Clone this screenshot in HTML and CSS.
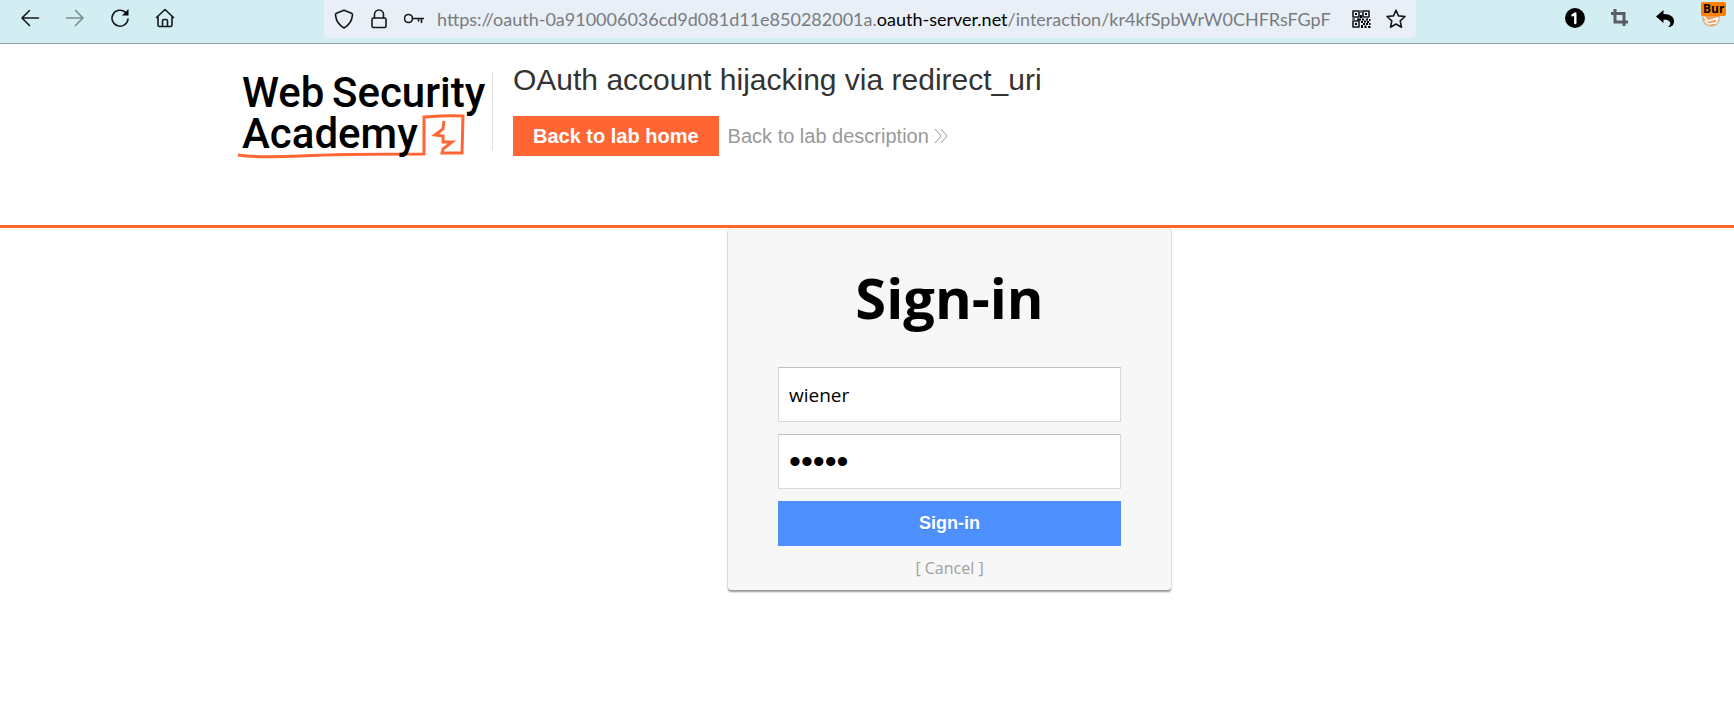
FILE: index.html
```html
<!DOCTYPE html>
<html lang="en">
<head>
<meta charset="utf-8">
<title>Sign-in</title>
<link rel="stylesheet" href="styles.css">
</head>
<body>
<div class="toolbar">
  <nav class="nav-buttons" aria-label="Browser navigation">
    <button class="icon-button" aria-label="Back"><svg width="20" height="20" viewBox="0 0 20 20"><path d="M18.5 10H2M9.5 2.5L2 10l7.5 7.5"/></svg></button>
    <button class="icon-button faded" aria-label="Forward"><svg width="20" height="20" viewBox="0 0 20 20"><path d="M1.500 10H18M10.500 2.500L18 10l-7.500 7.500"/></svg></button>
    <button class="icon-button" aria-label="Reload"><svg width="20" height="20" viewBox="0 0 20 20"><path d="M18 11a8 8 0 1 1-2.500-6.600"/><path class="solid" d="M18.500 1v6.500H12z"/></svg></button>
    <button class="icon-button" aria-label="Home"><svg width="20" height="20" viewBox="0 0 20 20"><path d="M1.500 9.500L10 1.500l8.500 8M3 8.500V17q0 1.500 1.500 1.500h11Q17 18.500 17 17V8.500M7.500 18.500V13q0-1.500 1.500-1.500h2q1.500 0 1.500 1.500v5.500"/></svg></button>
  </nav>
  <div class="address">
    <div class="site-icons">
      <button class="icon-button" aria-label="Tracking protection"><svg width="20" height="20" viewBox="0 0 20 20"><path d="M10 1.200L17.500 4.200q1.200.5 1 2Q17.500 15 10 19 2.500 15 1.500 6.200q-.2-1.500 1-2z"/></svg></button>
      <button class="icon-button" aria-label="Connection secure"><svg width="20" height="20" viewBox="0 0 20 20"><path d="M5.500 9V5.500a4.500 4.500 0 0 1 9 0V9"/><rect x="3" y="9" width="14" height="9.500" rx="1.500"/></svg></button>
      <button class="icon-button" aria-label="Saved password"><svg width="20" height="20" viewBox="0 0 20 20"><circle cx="4.500" cy="9.500" r="4"/><path d="M8.500 9.500H20M17.500 9.500v4M14.500 9.500v2.500"/></svg></button>
    </div>
    <div class="url">https://oauth-0a910006036cd9d081d11e850282001a.<span class="domain">oauth-server.net</span>/interaction/kr4kfSpbWrW0CHFRsFGpF</div>
    <div class="page-icons">
      <button class="icon-button" aria-label="QR code"><svg width="20" height="20" viewBox="0 0 20 20"><path d="M2 2h6v6H2zM12 2h6v6h-6zM2 12h6v6H2z"/><path class="solid" d="M4 4h2v2H4zM14 4h2v2h-2zM4 14h2v2H4zM9.500 1h1v3h-1zM9 6h2v3H9zM1 9.500h3v1H1zM6 9.500h4v2H6zM11 9.500h2v2h-2zM15 9.500h2v2h-2zM18 10h1.500v2H18zM13 11.500h2v2h-2zM10 12h2v2h-2zM16 12h2v2h-2zM12 14h2v2h-2zM15 14h2v2h-2zM18 14h1.500v2H18zM10 16h2v3h-2zM13.500 16.500h2v2.500h-2zM17 17h2.500v2H17z"/></svg></button>
      <button class="icon-button" aria-label="Bookmark"><svg width="20" height="20" viewBox="0 0 20 20"><path d="M10 1.200l2.500 5.700 6.500.6-4.800 4.300 1.300 6.400L10 15l-5.500 3.200 1.300-6.400L1 7.500l6.500-.6z"/></svg></button>
    </div>
  </div>
  <div class="extensions">
    <button class="icon-button" aria-label="One password"><svg width="20" height="20" viewBox="0 0 20 20"><circle class="solid" cx="10" cy="10" r="10"/><path class="one" d="M7.500 7.300L10.300 5.500V15"/></svg></button>
    <button class="icon-button" aria-label="Crop"><svg width="20" height="20" viewBox="0 0 20 20"><path class="crop" d="M5 1v13h13M1 5.500h13V18"/></svg></button>
    <button class="icon-button" aria-label="Undo"><svg width="20" height="20" viewBox="0 0 20 20"><path class="solid" d="M0 8.500L7.500 2v4c7 0 11 3 10.500 8-.3 3-2.500 5-6 5 4.500-3 2.500-7.500-4.500-7.500V15z"/></svg></button>
    <button class="icon-button proxy" aria-label="Proxy"><svg width="22" height="20" viewBox="0 0 22 20"><circle cx="10" cy="9.500" r="9.500" fill="#c9d1d3" stroke="none"/><path d="M2 7h17l-1 5q-3 7-8 6-6 0-8-6z" fill="#f0a060" stroke="none"/><path d="M3 9l4 4 10-3-2 5-8 1-3-3" stroke="#fff"/></svg><span class="badge">Bur</span></button>
  </div>
</div>

<header class="lab-header">
  <div class="lab-inner">
    <svg class="logo" width="254" height="94" viewBox="236 67 254 94" role="img" aria-label="Web Security Academy">
      <path class="sketch" d="M238 155Q260 158 300 156T424 154V117Q450 115 463 116L462 153H442L443 149 452 142H443V136L435 135 443 129 444 121"/>
      <g class="wordmark"><text x="242" y="107">Web</text><text x="332" y="107">Security</text><text x="242" y="148">Academy</text></g>
    </svg>
    <div class="lab-title">
      <h2>OAuth account hijacking via redirect_uri</h2>
      <div class="lab-links">
        <a class="home-link" href="#">Back to lab home</a>
        <a class="description-link" href="#">Back to lab description <svg width="14" height="14" viewBox="0 0 14 14"><path d="M1 0l6 7-6 7M7 0l6 7-6 7"/></svg></a>
      </div>
    </div>
  </div>
</header>

<main class="login">
  <form class="card">
    <h1>Sign-in</h1>
    <input type="text" aria-label="Login" value="wiener">
    <input type="password" aria-label="Password" value="peter">
    <button class="submit" type="button">Sign-in</button>
    <a class="cancel" href="#">[ Cancel ]</a>
  </form>
</main>
</body>
</html>
```
FILE: styles.css
```css
* {
  box-sizing: border-box;
}

body {
  margin: 0;
  background: #fff;
  color: #000;
  font-family: "Open Sans", "Noto Sans", sans-serif;
}

.toolbar {
  display: flex;
  height: 44px;
  padding: 0 9px 0 20px;
  background: #d2eef2;
  border-bottom: 1px solid #8fa5aa;
}

.nav-buttons {
  display: flex;
  flex: none;
  gap: 25px;
  width: 304px;
  padding-top: 8px;
}

.icon-button {
  display: block;
  flex: none;
  height: 20px;
  padding: 0;
  border: 0;
  background: none;
}

.icon-button svg {
  display: block;
  fill: none;
  stroke: #15191c;
  stroke-width: 1.6;
  stroke-linejoin: round;
  stroke-linecap: round;
}

.icon-button.faded {
  opacity: .45;
}

.icon-button .solid {
  fill: #000;
  stroke: none;
}

.icon-button .one {
  stroke: #fff;
  stroke-width: 2.4;
}

.icon-button .crop {
  stroke: #5b5b66;
  stroke-width: 3;
  stroke-linecap: butt;
  stroke-linejoin: miter;
}

.address {
  display: flex;
  flex: 1;
  align-items: center;
  min-width: 0;
  height: 38px;
  padding: 0 10px;
  border-radius: 0 0 5px 5px;
  background: #e9eff6;
}

.site-icons,
.page-icons {
  display: flex;
  flex: none;
  gap: 15px;
}

.url {
  flex: 1;
  min-width: 0;
  margin: 0 8px 0 13px;
  overflow: hidden;
  color: #777c80;
  font-family: Lato, "Open Sans", sans-serif;
  font-size: 18px;
  line-height: 36px;
  white-space: nowrap;
}

.url .domain {
  color: #000;
}

.extensions {
  display: flex;
  flex: none;
  justify-content: space-between;
  width: 158px;
  margin-left: 149px;
  margin-right: 2px;
  padding-top: 8px;
}

.proxy {
  position: relative;
}

.badge {
  position: absolute;
  top: -6px;
  left: 0;
  padding: 0 2px;
  border-radius: 2px;
  background: #ff7f00;
  color: #000;
  font: bold 12px/14px "Open Sans", sans-serif;
}

.lab-header {
  height: 184px;
  border-bottom: 3px solid #ff6633;
  font-family: "Liberation Sans", Arial, sans-serif;
}

.lab-inner {
  display: flex;
  align-items: flex-start;
  padding: 19px 20px 0 236px;
}

.logo {
  flex: none;
  margin-top: 4px;
}

.sketch {
  fill: none;
  stroke: #ff6633;
  stroke-width: 3;
}

.wordmark {
  fill: #000;
  font-family: Roboto, sans-serif;
  font-size: 42px;
  font-weight: 500;
}

.lab-title {
  padding-left: 21px;
  margin-left: 2px;
  background: linear-gradient(#e0e0e0, #e0e0e0) 0 9px / 1px 78px no-repeat;
}

.lab-title h2 {
  margin: 0;
  color: #333332;
  font-size: 30px;
  font-weight: 400;
  line-height: 34px;
}

.lab-links {
  display: flex;
  align-items: center;
  gap: 9px;
  margin-top: 19px;
  font-size: 20px;
  line-height: 40px;
}

.home-link {
  padding: 0 20px;
  background: #ff6633;
  color: #fff;
  font-weight: 700;
  text-decoration: none;
}

.description-link {
  color: #999;
  text-decoration: none;
}

.description-link svg {
  fill: none;
  stroke: #999;
}

.login {
  padding: 0 20px 60px 728px;
}

.card {
  display: flex;
  flex-direction: column;
  width: 443px;
  padding: 31px 50px 10px;
  border-radius: 3px;
  background: #f7f7f7;
  box-shadow: 0 0 1px rgba(0, 0, 0, .3), 0 2px 2px rgba(0, 0, 0, .4);
}

.card h1 {
  margin: 0 0 32px;
  font-size: 56px;
  font-weight: 700;
  line-height: 76px;
  text-align: center;
}

.card input {
  height: 55px;
  margin-bottom: 12px;
  padding: 0 10px;
  border: 1px solid #d9d9d9;
  border-top-color: #c0c0c0;
  border-radius: 0;
  outline: 0;
  background: #fff;
  color: #000;
  font-family: "Open Sans", sans-serif;
  font-size: 19px;
}

.card input[type="password"] {
  font-family: "Liberation Sans", Arial, sans-serif;
  font-size: 34px;
}

.submit {
  height: 45px;
  padding: 0;
  border: 0;
  background: #4d90fe;
  color: #fff;
  font: bold 18px "Liberation Sans", Arial, sans-serif;
  text-shadow: 0 1px rgba(0, 0, 0, .1);
}

.cancel {
  margin-top: 10px;
  color: #a0a0a0;
  font-size: 16px;
  line-height: 24px;
  text-align: center;
  text-decoration: none;
}
```
